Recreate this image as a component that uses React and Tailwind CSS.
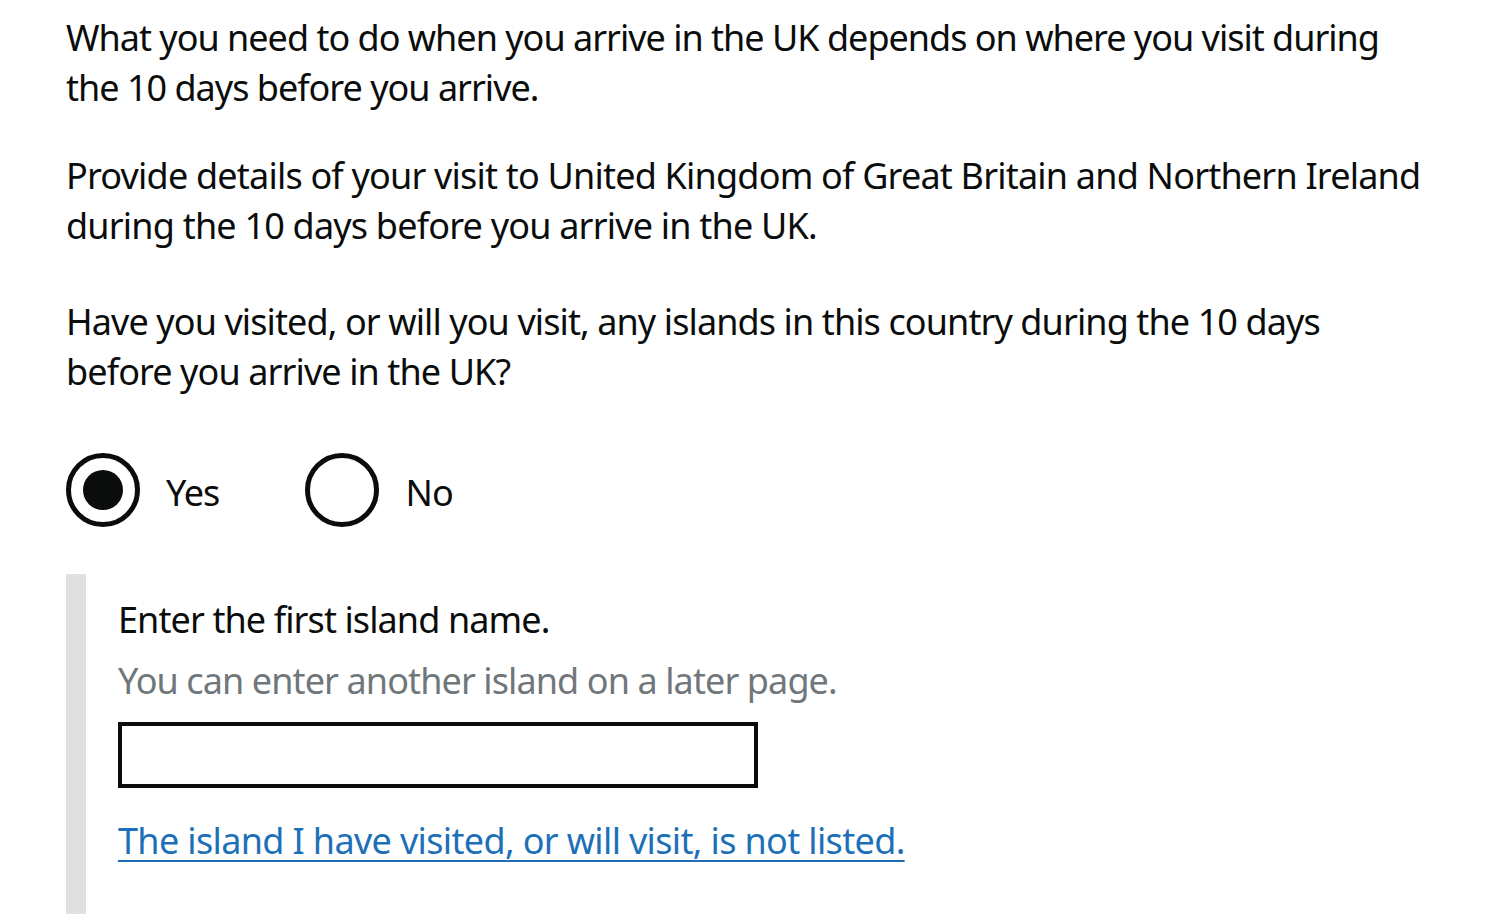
import React, { useState } from 'react';

const font = { fontFamily: '"Noto Sans", Arial, sans-serif' };

function Radio({ label, checked, onClick }) {
    return (
        <label className="flex items-center cursor-pointer" onClick={onClick}>
            <span className="w-[74px] h-[74px] rounded-full border-[5px] border-[#0b0c0c] flex items-center justify-center bg-white">
                {checked && <span className="w-[40px] h-[40px] rounded-full bg-[#0b0c0c]" />}
            </span>
            <span className="ml-[26px] pt-[6px] text-[36px] leading-[50px] text-[#0b0c0c]">{label}</span>
        </label>
    );
}

export default function App() {
    const [answer, setAnswer] = useState('yes');

    return (
        <div className="bg-white min-h-[914px] w-[1490px] overflow-hidden text-[#0b0c0c]" style={font}>
            <div className="pl-[66px] pt-[13px] pr-[40px]">
                <p className="text-[36px] leading-[50px] tracking-[-1px]">
                    What you need to do when you arrive in the UK depends on where you visit during
                    <br />
                    the 10 days before you arrive.
                </p>
                <p className="mt-[38px] text-[36px] leading-[50px] tracking-[-0.8px]">
                    Provide details of your visit to United Kingdom of Great Britain and Northern Ireland
                    <br />
                    during the 10 days before you arrive in the UK.
                </p>
                <p className="mt-[46px] text-[36px] leading-[50px] tracking-[-0.9px]">
                    Have you visited, or will you visit, any islands in this country during the 10 days
                    <br />
                    before you arrive in the UK?
                </p>

                {/* Yes / No radios */}
                <div className="mt-[56px] flex items-center gap-[86px] tracking-[-0.9px]">
                    <Radio label="Yes" checked={answer === 'yes'} onClick={() => setAnswer('yes')} />
                    <Radio label="No" checked={answer === 'no'} onClick={() => setAnswer('no')} />
                </div>

                {/* Conditional reveal */}
                <div className="mt-[47px] border-l-[20px] border-[#dee0e2] pl-[32px] pt-[21px] pb-[60px] tracking-[-0.9px]">
                    <p className="text-[36px] leading-[50px]">Enter the first island name.</p>
                    <p className="mt-[11px] text-[36px] leading-[50px] text-[#6f777b]">
                        You can enter another island on a later page.
                    </p>
                    <input
                        type="text"
                        className="mt-[16px] block w-[640px] h-[66px] border-[4px] border-[#0b0c0c] outline-none px-3 text-[36px]"
                    />
                    <a
                        href="#"
                        className="mt-[28px] inline-block text-[36px] leading-[50px] tracking-[-0.65px] text-[#1d70b8] underline underline-offset-[6px] decoration-[2px]"
                    >
                        The island I have visited, or will visit, is not listed.
                    </a>
                </div>
            </div>
        </div>
    );
}
